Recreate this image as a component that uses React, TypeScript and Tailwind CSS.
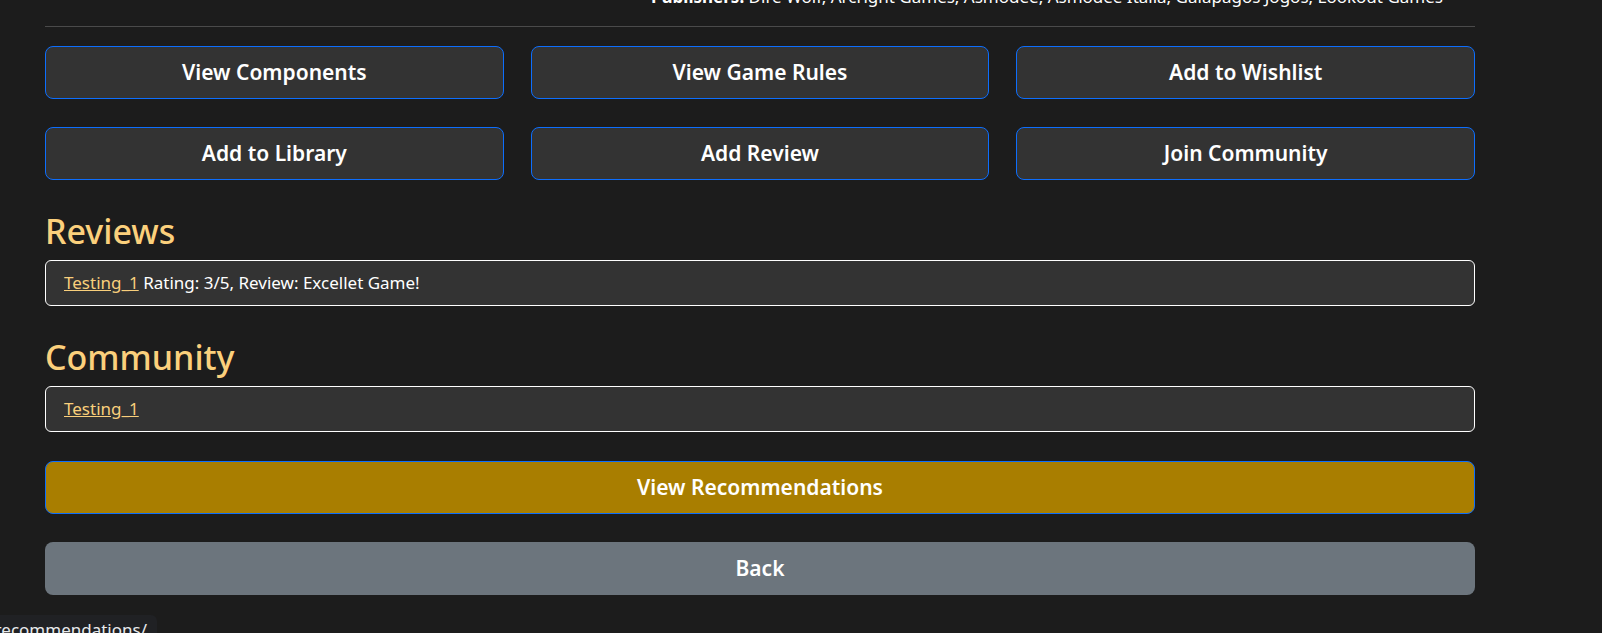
import React from "react";

const btn =
  "h-[53px] flex items-center justify-center rounded-[8px] border border-[#0d6efd] bg-[#333333] text-white text-[21px] font-semibold";

export default function App() {
  return (
    <div className="relative min-h-screen h-[633px] overflow-hidden bg-[#1c1c1c] text-white font-['Segoe_UI','Noto_Sans',sans-serif]">
      <div className="ml-[45px] w-[1430px] mt-[-15px]">
        <div className="flex">
          <div className="w-[574px] shrink-0" />
          <p className="flex-1 text-center text-[17px] leading-[24px] whitespace-nowrap">
            <b>Publishers:</b> Dire Wolf, Arcright Games, Asmodee, Asmodee Italia, Galapagos Jogos, Lookout Games
          </p>
        </div>
        <hr className="mt-[17px] border-0 border-t border-[#4a4a4a]" />
        <div className="mt-[19px] grid grid-cols-3 gap-x-[27px] gap-y-[28px]">
          <button className={btn}>View Components</button>
          <button className={btn}>View Game Rules</button>
          <button className={btn}>Add to Wishlist</button>
          <button className={btn}>Add to Library</button>
          <button className={btn}>Add Review</button>
          <button className={btn}>Join Community</button>
        </div>
        <h2 className="mt-[31px] mb-[8px] text-[34px] leading-[41px] font-medium text-[#fbd07c]">Reviews</h2>
        <div className="h-[46px] flex items-center rounded-[6px] border border-white bg-[#333333] px-[18px] text-[17px] leading-[24px]">
          <span>
            <a href="#" className="text-[#f9cf7b] underline">Testing_1</a> Rating: 3/5, Review: Excellet Game!
          </span>
        </div>
        <h2 className="mt-[31px] mb-[8px] text-[34px] leading-[41px] font-medium text-[#fbd07c]">Community</h2>
        <div className="h-[46px] flex items-center rounded-[6px] border border-white bg-[#333333] px-[18px] text-[17px] leading-[24px]">
          <a href="#" className="text-[#f9cf7b] underline">Testing_1</a>
        </div>
        <button className="mt-[29px] w-full h-[53px] flex items-center justify-center rounded-[8px] border border-[#0d6efd] bg-[#a97e00] text-white text-[21px] font-semibold">
          View Recommendations
        </button>
        <button className="mt-[28px] w-full h-[53px] flex items-center justify-center rounded-[8px] bg-[#6c757d] text-white text-[21px] font-semibold">
          Back
        </button>
      </div>
      <div className="absolute left-0 top-[615px] w-[157px] h-[30px] overflow-hidden rounded-tr-[6px] bg-[#202124] flex justify-end">
        <span className="whitespace-nowrap pr-[10px] pt-[4px] text-[17px] leading-[22px] text-[#e8eaed]">
          localhost:8000/games/1/recommendations/
        </span>
      </div>
    </div>
  );
}
